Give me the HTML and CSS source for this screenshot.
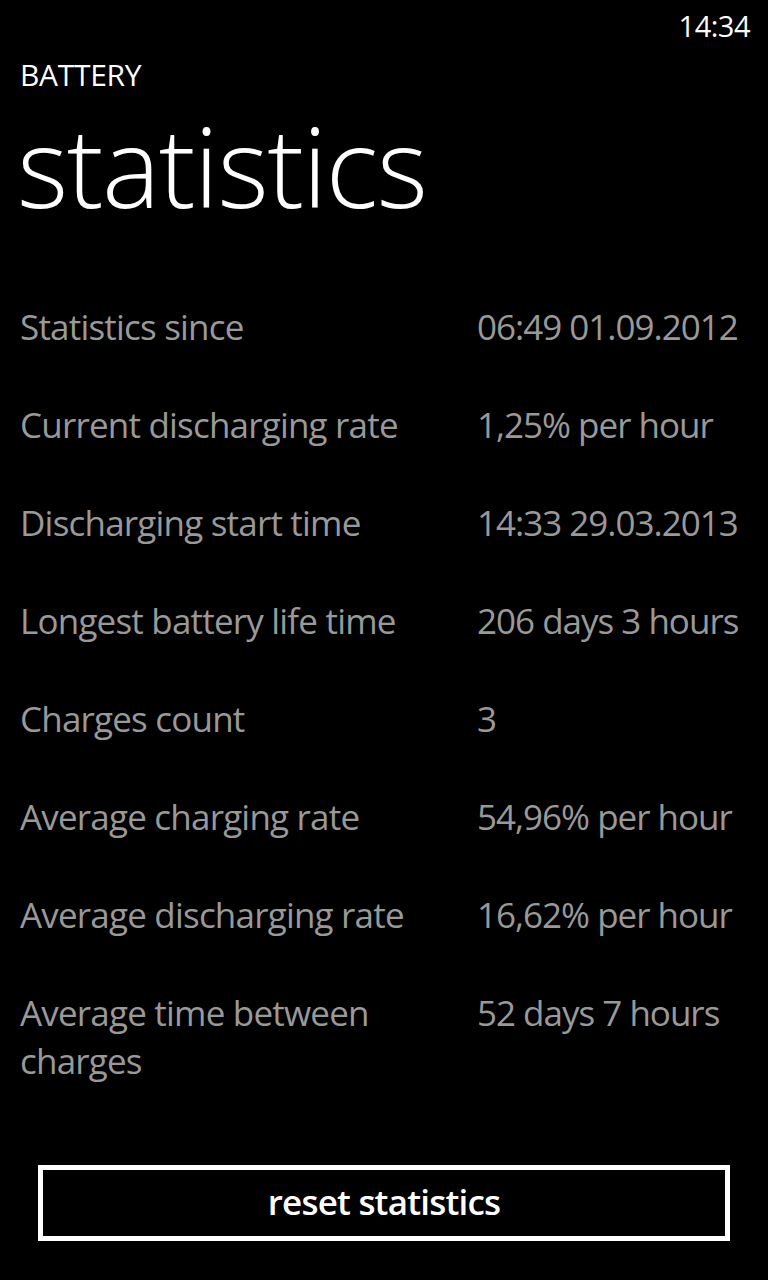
FILE: index.html
```html
<!DOCTYPE html>
<html lang="en">
<head>
    <meta charset="UTF-8">
    <meta name="viewport" content="width=device-width, initial-scale=1.0">
    <title>Battery statistics</title>
    <link rel="stylesheet" href="styles.css">
</head>
<body>
    <div class="status-bar">
        <span class="clock">14:34</span>
    </div>

    <div class="title-panel">
        <div class="app-title">BATTERY</div>
        <h1 class="page-title">statistics</h1>
    </div>

    <div class="stats">
        <div class="stat-label">Statistics since</div>
        <div class="stat-value">06:49 01.09.2012</div>

        <div class="stat-label">Current discharging rate</div>
        <div class="stat-value">1,25% per hour</div>

        <div class="stat-label">Discharging start time</div>
        <div class="stat-value">14:33 29.03.2013</div>

        <div class="stat-label">Longest battery life time</div>
        <div class="stat-value">206 days 3 hours</div>

        <div class="stat-label">Charges count</div>
        <div class="stat-value">3</div>

        <div class="stat-label">Average charging rate</div>
        <div class="stat-value">54,96% per hour</div>

        <div class="stat-label">Average discharging rate</div>
        <div class="stat-value">16,62% per hour</div>

        <div class="stat-label">Average time between charges</div>
        <div class="stat-value">52 days 7 hours</div>
    </div>

    <div class="actions">
        <button class="reset-button">reset statistics</button>
    </div>
</body>
</html>
```

FILE: styles.css
```css
html, body {
    margin: 0;
    background-color: #000;
    color: #fff;
    font-family: "Open Sans", "Noto Sans", sans-serif;
}
body {
    width: 768px;
    height: 1280px;
    overflow: hidden;
}
.status-bar {
    height: 50px;
    display: flex;
    justify-content: flex-end;
    align-items: center;
    padding-right: 18px;
}
.clock {
    font-size: 29px;
    line-height: 1;
    letter-spacing: -0.5px;
}
.title-panel {
    padding: 10px 0 0 20px;
}
.app-title {
    font-size: 30px;
    line-height: 30px;
    letter-spacing: -0.3px;
}
.page-title {
    margin: 0 0 0 -3px;
    font-size: 110px;
    font-weight: 300;
    line-height: 150px;
    letter-spacing: -1.5px;
}
.stats {
    display: grid;
    grid-template-columns: 457px 1fr;
    row-gap: 50px;
    padding: 63px 0 0 20px;
    font-size: 35px;
    line-height: 48px;
    color: #999;
    letter-spacing: -0.8px;
}
.stat-label {
    padding-right: 20px;
}
.stat-value {
    letter-spacing: -1px;
}
.actions {
    padding: 80px 38px 0;
}
.reset-button {
    display: block;
    width: 100%;
    height: 76px;
    background-color: #000;
    border: 5px solid #fff;
    color: #fff;
    font-family: inherit;
    font-size: 35px;
    font-weight: 600;
    letter-spacing: -0.8px;
    padding: 0 0 3px;
    cursor: pointer;
}
```
